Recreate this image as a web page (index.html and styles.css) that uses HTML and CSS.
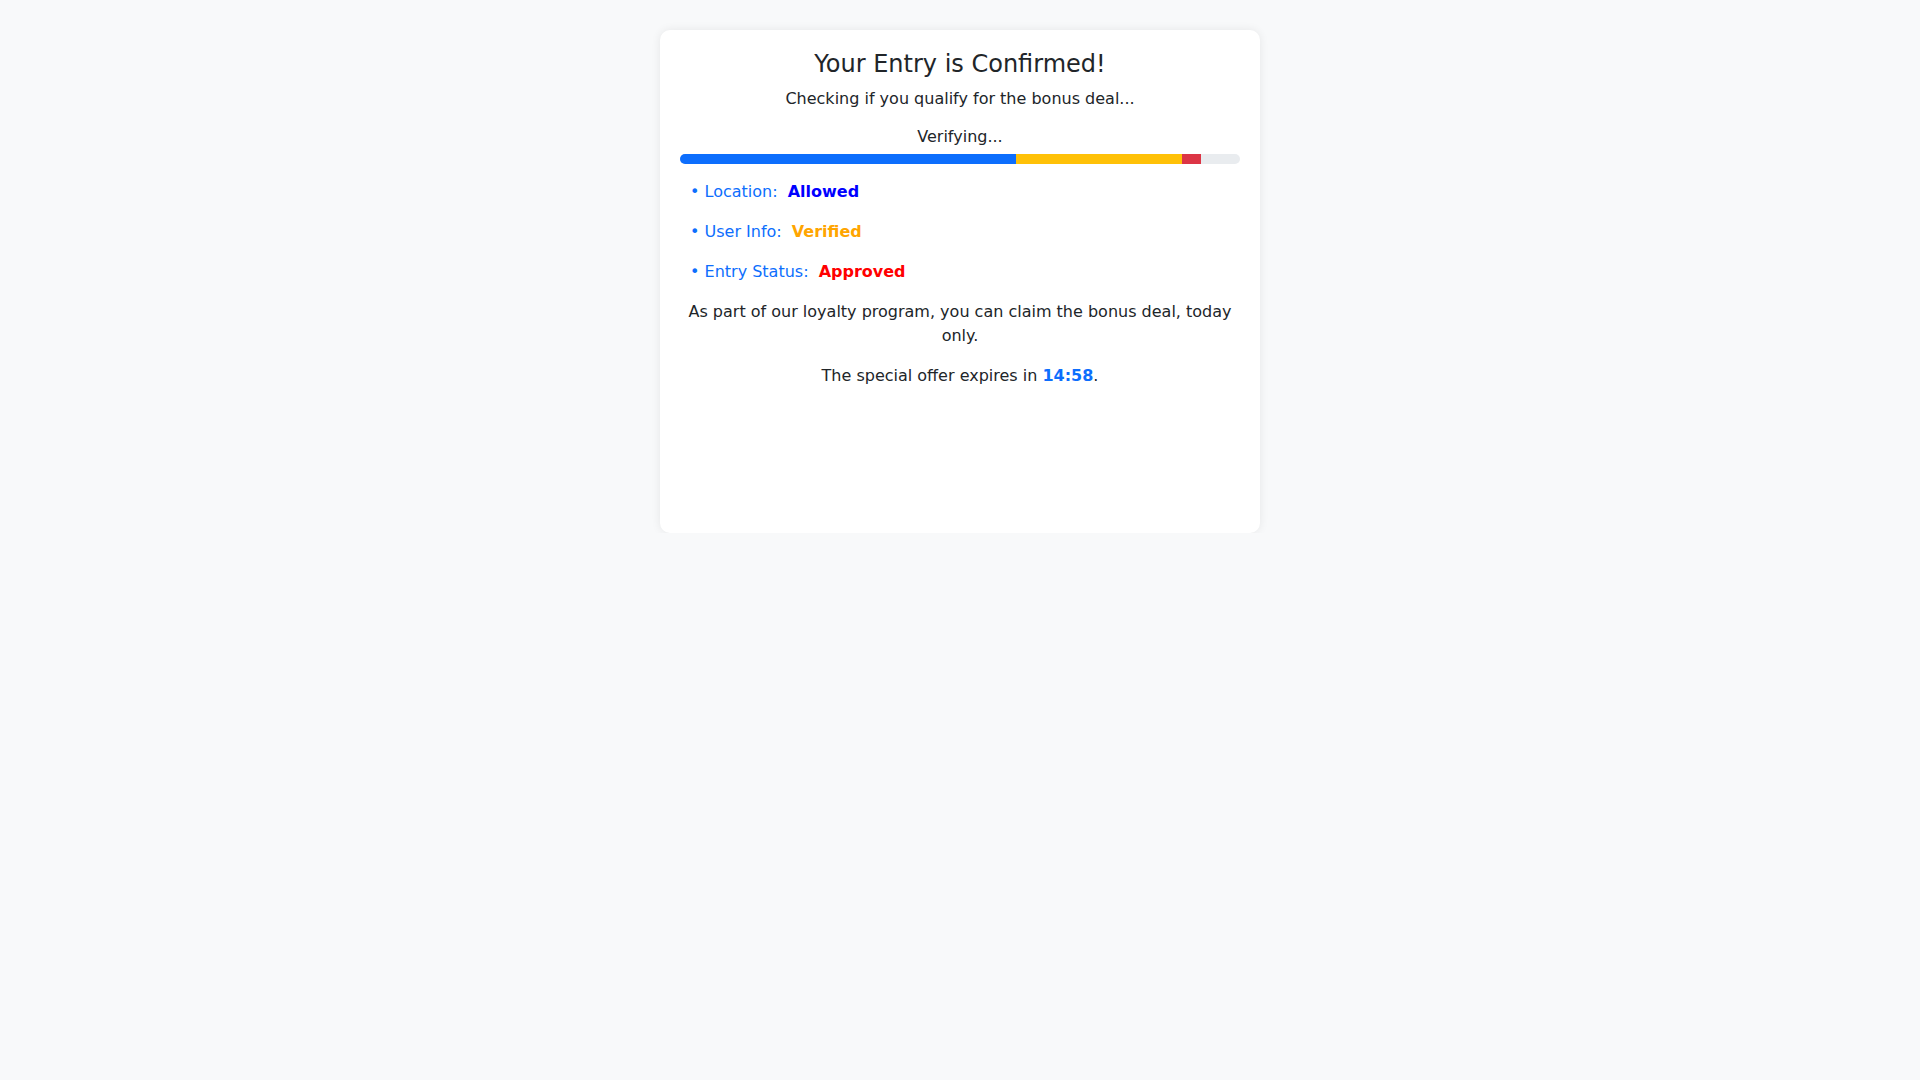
FILE: index.html
```html
<!DOCTYPE html>
<html lang="en">
<head>
    <meta charset="UTF-8">
    <meta name="viewport" content="width=device-width, initial-scale=1.0">
    <title>Entry Confirmed</title>
    <link rel="stylesheet" href="styles.css">
</head>
<body>
    <div class="container">
        <h2 class="title">Your Entry is Confirmed!</h2>
        <p class="subtitle">Checking if you qualify for the bonus deal...</p>

        <p class="verifying">Verifying...</p>
        <div class="progress">
            <div class="progress-bar bar-blue" style="width: 60%"></div>
            <div class="progress-bar bar-yellow" style="width: 29.6%"></div>
            <div class="progress-bar bar-red" style="width: 3.4%"></div>
        </div>

        <ul class="checks">
            <li><span class="label">• Location:</span> <span class="value allowed">Allowed</span></li>
            <li><span class="label">• User Info:</span> <span class="value verified">Verified</span></li>
            <li><span class="label">• Entry Status:</span> <span class="value approved">Approved</span></li>
        </ul>

        <p class="message">As part of our loyalty program, you can claim the bonus deal, today only.</p>
        <p class="message">The special offer expires in <span class="timer">14:58</span>.</p>
    </div>
</body>
</html>
```

FILE: styles.css
```css
body {
    font-family: "DejaVu Sans", sans-serif;
    font-size: 16px;
    line-height: 1.5;
    color: #212529;
    margin: 0;
    padding: 0;
    background-color: #f8f9fa;
}

.container {
    width: 600px;
    box-sizing: border-box;
    min-height: 503px;
    margin: 30px auto 0;
    padding: 20px;
    background-color: #ffffff;
    border-radius: 10px;
    box-shadow: 0 0 10px rgba(0,0,0,0.08);
    text-align: center;
}

.title {
    font-size: 24px;
    font-weight: 400;
    line-height: 1.2;
    margin: 0 0 8px;
}

.subtitle {
    margin: 0 0 14px;
}

.verifying {
    margin: 0 0 5px;
}

.progress {
    display: flex;
    height: 10px;
    background-color: #e9ecef;
    border-radius: 5px;
    overflow: hidden;
}

.bar-blue {
    background-color: #0d6efd;
}

.bar-yellow {
    background-color: #ffc107;
}

.bar-red {
    background-color: #dc3545;
}

.checks {
    list-style: none;
    padding: 0 0 0 10px;
    margin: 16px 0 0;
    text-align: left;
}

.checks li {
    margin-bottom: 16px;
}

.checks .label {
    color: #0d6efd;
    margin-right: 5px;
}

.checks .value {
    font-weight: bold;
}

.allowed {
    color: #0000ff;
}

.verified {
    color: #ffa500;
}

.approved {
    color: #ff0000;
}

.message {
    margin: 0 0 16px;
}

.timer {
    color: #0d6efd;
    font-weight: bold;
}
```
